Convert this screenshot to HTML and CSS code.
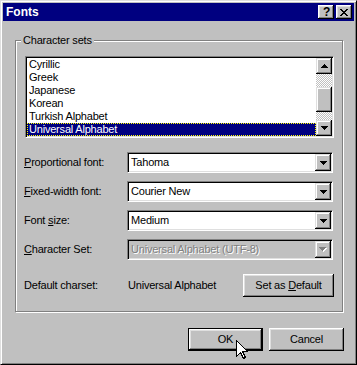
FILE: index.html
```html
<!DOCTYPE html>
<html>
  <head>
    <meta charset="utf-8">
    <title>Fonts</title>
    <link rel="stylesheet" href="styles.css">
  </head>

  <body>
    <div class="window">
      <!-- Title bar -->
      <div class="titlebar">
        <span class="title">Fonts</span>
        <div class="title-buttons">
          <span class="tbtn tbtn-help">?</span>
          <span class="tbtn">
            <svg width="8" height="7" viewBox="0 0 8 7">
              <path d="M0 0h2v1H0zM6 0h2v1H6zM1 1h2v1H1zM5 1h2v1H5zM2 2h4v1H2zM3 3h2v1H3zM2 4h4v1H2zM1 5h2v1H1zM5 5h2v1H5zM0 6h2v1H0zM6 6h2v1H6z" fill="#000"/>
            </svg>
          </span>
        </div>
      </div>

      <div class="content">
        <!-- Character sets group -->
        <div class="group">
          <span class="group-title">Character sets</span>

          <div class="listbox">
            <ul class="items">
              <li>Cyrillic</li>
              <li>Greek</li>
              <li>Japanese</li>
              <li>Korean</li>
              <li>Turkish Alphabet</li>
              <li class="selected">Universal Alphabet</li>
            </ul>
            <div class="vscroll">
              <span class="sbtn">
                <svg width="7" height="4" viewBox="0 0 7 4"><path d="M3 0h1v1H3zM2 1h3v1H2zM1 2h5v1H1zM0 3h7v1H0z" fill="#000"/></svg>
              </span>
              <div class="track">
                <span class="thumb"></span>
              </div>
              <span class="sbtn">
                <svg width="7" height="4" viewBox="0 0 7 4"><path d="M0 0h7v1H0zM1 1h5v1H1zM2 2h3v1H2zM3 3h1v1H3z" fill="#000"/></svg>
              </span>
            </div>
          </div>

          <div class="field-row first">
            <label class="field-label"><u>P</u>roportional font:</label>
            <div class="combo">
              <span class="combo-value">Tahoma</span>
              <span class="sbtn drop">
                <svg width="7" height="4" viewBox="0 0 7 4"><path d="M0 0h7v1H0zM1 1h5v1H1zM2 2h3v1H2zM3 3h1v1H3z" fill="#000"/></svg>
              </span>
            </div>
          </div>

          <div class="field-row">
            <label class="field-label"><u>F</u>ixed-width font:</label>
            <div class="combo">
              <span class="combo-value">Courier New</span>
              <span class="sbtn drop">
                <svg width="7" height="4" viewBox="0 0 7 4"><path d="M0 0h7v1H0zM1 1h5v1H1zM2 2h3v1H2zM3 3h1v1H3z" fill="#000"/></svg>
              </span>
            </div>
          </div>

          <div class="field-row">
            <label class="field-label">Font <u>s</u>ize:</label>
            <div class="combo">
              <span class="combo-value">Medium</span>
              <span class="sbtn drop">
                <svg width="7" height="4" viewBox="0 0 7 4"><path d="M0 0h7v1H0zM1 1h5v1H1zM2 2h3v1H2zM3 3h1v1H3z" fill="#000"/></svg>
              </span>
            </div>
          </div>

          <div class="field-row">
            <label class="field-label"><u>C</u>haracter Set:</label>
            <div class="combo disabled">
              <span class="combo-value">Universal Alphabet (UTF-8)</span>
              <span class="sbtn drop">
                <svg width="8" height="5" viewBox="0 0 8 5">
                  <path d="M1 1h7v1H1zM2 2h5v1H2zM3 3h3v1H3zM4 4h1v1H4z" fill="#fff"/>
                  <path d="M0 0h7v1H0zM1 1h5v1H1zM2 2h3v1H2zM3 3h1v1H3z" fill="#808080"/>
                </svg>
              </span>
            </div>
          </div>

          <div class="default-row">
            <span class="field-label">Default charset:</span>
            <span class="default-value">Universal Alphabet</span>
            <button class="btn btn-default-set">Set as <u>D</u>efault</button>
          </div>
        </div>

        <!-- Dialog buttons -->
        <div class="actions">
          <button class="btn btn-ok">OK</button>
          <button class="btn">Cancel</button>
        </div>
      </div>

      <!-- Mouse pointer over the OK button -->
      <svg class="cursor" width="12" height="19" viewBox="0 0 12 19">
        <polygon points="0.5,0.5 0.5,16.5 4.5,12.5 7.5,18.5 9.5,17.5 6.5,11.5 11.5,11.5" fill="#fff" stroke="#000" stroke-width="1" shape-rendering="crispEdges"/>
      </svg>
    </div>
  </body>
</html>
```

FILE: styles.css
```css
/*
  Win9x dialog palette:
  #C0C0C0 face, #FFFFFF highlight, #DFDFDF light, #808080 shadow, #000080 caption
*/

* {
  margin: 0;
  padding: 0;
  box-sizing: border-box;
}

body {
  background-color: #c0c0c0;
  font-family: "Liberation Sans", Arial, sans-serif;
  font-size: 11px;
  line-height: 13px;
  letter-spacing: -0.2px;
  color: #000;
}

/* Window frame */
.window {
  position: relative;
  width: 357px;
  height: 365px;
  border: 1px solid;
  border-color: #dfdfdf #000 #000 #dfdfdf;
  box-shadow: inset 1px 1px #fff, inset -1px -1px #808080;
  padding: 2px;
  display: flex;
  flex-direction: column;
}

/* Title bar */
.titlebar {
  height: 18px;
  background-color: #000080;
  display: flex;
  align-items: center;
  justify-content: space-between;
  padding: 0 2px 0 3px;
}
.title {
  color: #fff;
  font-weight: bold;
  font-size: 12px;
  letter-spacing: 0;
}
.title-buttons {
  display: flex;
  gap: 2px;
}
.tbtn {
  width: 16px;
  height: 14px;
  background-color: #c0c0c0;
  box-shadow: inset -1px -1px #000, inset 1px 1px #fff, inset -2px -2px #808080, inset 2px 2px #dfdfdf;
  display: flex;
  align-items: center;
  justify-content: center;
}
.tbtn-help {
  font-weight: bold;
  font-size: 12px;
  line-height: 14px;
  padding-left: 1px;
}

/* Dialog body */
.content {
  flex: 1;
  display: flex;
  flex-direction: column;
}

/* Etched group box */
.group {
  margin: 19px 0 0 12px;
  width: 328px;
  border: 1px solid #808080;
  box-shadow: inset 1px 1px #fff, 1px 1px #fff;
  padding: 0 8px 14px 9px;
  display: flex;
  flex-direction: column;
}
.group-title {
  align-self: flex-start;
  margin: -7px 0 0 -4px;
  padding: 0 2px;
  background-color: #c0c0c0;
}

/* Sunken fields */
.listbox,
.combo {
  border: 1px solid;
  border-color: #808080 #fff #fff #808080;
  box-shadow: inset 1px 1px #000, inset -1px -1px #dfdfdf;
  padding: 1px;
  background-color: #fff;
}

.listbox {
  margin-top: 9px;
  height: 82px;
  display: flex;
}
.items {
  flex: 1;
  list-style: none;
}
.items li {
  height: 13px;
  padding-left: 2px;
  white-space: nowrap;
}
.items li.selected {
  background-color: #000080;
  color: #fff;
  border: 1px dotted #ffff00;
  padding-left: 1px;
  line-height: 11px;
}

/* Scrollbar */
.vscroll {
  width: 16px;
  display: flex;
  flex-direction: column;
}
.sbtn {
  width: 16px;
  height: 16px;
  background-color: #c0c0c0;
  box-shadow: inset -1px -1px #000, inset 1px 1px #dfdfdf, inset -2px -2px #808080, inset 2px 2px #fff;
  display: flex;
  align-items: center;
  justify-content: center;
}
.track {
  flex: 1;
  background: repeating-conic-gradient(#c0c0c0 0 25%, #fff 0 50%) 0 0 / 2px 2px;
  padding-top: 13px;
}
.thumb {
  display: block;
  width: 16px;
  height: 25px;
  background-color: #c0c0c0;
  box-shadow: inset -1px -1px #000, inset 1px 1px #dfdfdf, inset -2px -2px #808080, inset 2px 2px #fff;
}

/* Label + combo rows */
.field-row {
  display: flex;
  align-items: center;
  margin-top: 8px;
}
.field-row.first {
  margin-top: 14px;
}
.field-label {
  width: 103px;
  margin-left: -1px;
  flex-shrink: 0;
}
.combo {
  width: 206px;
  height: 21px;
  display: flex;
  align-items: center;
  justify-content: space-between;
}
.combo-value {
  padding-left: 2px;
}
.sbtn.drop {
  height: 17px;
}
.combo.disabled {
  background-color: #c0c0c0;
}
.combo.disabled .combo-value {
  color: #808080;
  text-shadow: 1px 1px #fff;
}

/* Default charset row */
.default-row {
  display: flex;
  align-items: center;
  margin-top: 14px;
}
.default-value {
  flex: 1;
  margin-left: 1px;
}

/* Push buttons */
.btn {
  font: inherit;
  letter-spacing: inherit;
  color: #000;
  height: 23px;
  border: none;
  background-color: #c0c0c0;
  box-shadow: inset -1px -1px #000, inset 1px 1px #fff, inset -2px -2px #808080, inset 2px 2px #dfdfdf;
}
.btn-default-set {
  width: 91px;
}

.actions {
  display: flex;
  justify-content: flex-end;
  gap: 6px;
  margin-top: 16px;
  padding-right: 10px;
}
.actions .btn {
  width: 75px;
}
.btn-ok {
  border: 1px solid #000;
}

/* Pointer */
.cursor {
  position: absolute;
  left: 235px;
  top: 339px;
}
```
